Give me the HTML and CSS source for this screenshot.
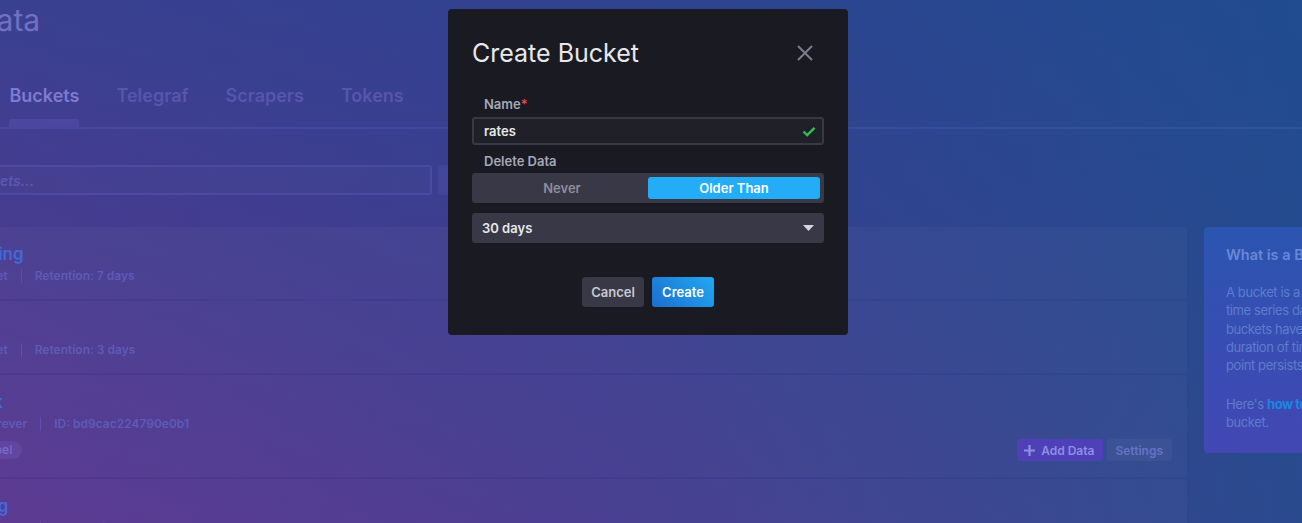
FILE: index.html
```html
<!DOCTYPE html>
<html lang="en">
<head>
<meta charset="utf-8">
<title>Load Data - Buckets</title>
<link rel="stylesheet" href="styles.css">
</head>
<body>
<div class="app">
  <div class="page">
    <header class="page-header">
      <h1 class="page-title">Load Data</h1>
    </header>
    <nav class="tabs">
      <div class="tab"><span class="tab-label">Sources</span><span class="tab-bar"></span></div>
      <div class="tab active"><span class="tab-label">Buckets</span><span class="tab-bar"></span></div>
      <div class="tab"><span class="tab-label">Telegraf</span><span class="tab-bar"></span></div>
      <div class="tab"><span class="tab-label">Scrapers</span><span class="tab-bar"></span></div>
      <div class="tab"><span class="tab-label">Tokens</span><span class="tab-bar"></span></div>
    </nav>
    <div class="page-contents">
      <div class="filter-row">
        <div class="search"><span class="placeholder">Filter buckets...</span></div>
        <div class="sort-btn">Sort by Name (A → Z)</div>
      </div>
      <div class="main-grid">
        <div class="bucket-list">
          <div class="bucket-card">
            <div class="bucket-name">_monitoring</div>
            <div class="bucket-meta"><span>System Bucket</span><span class="sep"></span><span>Retention: 7 days</span></div>
          </div>
          <div class="bucket-card">
            <div class="bucket-name">_tasks</div>
            <div class="bucket-meta"><span>System Bucket</span><span class="sep"></span><span>Retention: 3 days</span></div>
          </div>
          <div class="bucket-card">
            <div class="bucket-name">feedback</div>
            <div class="bucket-meta"><span>Retention: Forever</span><span class="sep"></span><span>ID: bd9cac224790e0b1</span></div>
            <div class="bucket-actions">
              <span class="label-pill">+ Add a label</span>
              <div class="action-buttons">
                <span class="btn-add"><svg class="plus" width="13" height="13" viewBox="0 0 13 13"><path d="M6.5 1v11M1 6.5h11" stroke="currentColor" stroke-width="2.2" fill="none"/></svg>Add Data</span>
                <span class="btn-settings">Settings</span>
              </div>
            </div>
          </div>
          <div class="bucket-card">
            <div class="bucket-name">streaming</div>
            <div class="bucket-meta"><span>Retention: Forever</span><span class="sep"></span><span>ID: 04a1f3c9b2e8d711</span></div>
          </div>
        </div>
        <aside class="info-panel">
          <h3 class="info-title">What is a Bucket?</h3>
          <p class="info-text">A bucket is a named location where<br>time series data is stored. All<br>buckets have a Retention Policy, a<br>duration of time that each data<br>point persists.</p>
          <p class="info-text info-second">Here's <span class="info-link">how to write data</span> into your<br>bucket.</p>
        </aside>
      </div>
    </div>
  </div>
</div>

<div class="overlay">
  <div class="modal">
    <div class="modal-header">
      <h2 class="modal-title">Create Bucket</h2>
      <svg class="close" width="16" height="16" viewBox="0 0 16 16"><path d="M1 1L15 15M15 1L1 15" stroke="currentColor" stroke-width="2" fill="none"/></svg>
    </div>
    <div class="modal-body">
      <div class="field-label">Name<span class="req">*</span></div>
      <div class="input">
        <span class="input-value">rates</span>
        <svg class="check" width="14" height="11" viewBox="0 0 14 11"><path d="M1.5 5.5L5.2 9L12.5 1.8" stroke="currentColor" stroke-width="2.4" fill="none"/></svg>
      </div>
      <div class="field-label second">Delete Data</div>
      <div class="toggle">
        <span class="toggle-opt">Never</span>
        <span class="toggle-opt selected">Older Than</span>
      </div>
      <div class="dropdown">
        <span>30 days</span>
        <svg class="caret" width="11" height="6" viewBox="0 0 11 6"><path d="M0 0H11L5.5 6Z" fill="currentColor"/></svg>
      </div>
      <div class="modal-footer">
        <span class="btn btn-cancel">Cancel</span>
        <span class="btn btn-create">Create</span>
      </div>
    </div>
  </div>
</div>
</body>
</html>
```
FILE: styles.css
```css
* { box-sizing: border-box; }

html, body {
  margin: 0;
  width: 1302px;
  height: 523px;
  overflow: hidden;
}

body {
  position: relative;
  font-family: Inter, "Noto Sans", sans-serif;
  background:
    linear-gradient(to bottom, rgba(20, 78, 146, 0.44) 0%, rgba(20, 78, 146, 0) 100%),
    linear-gradient(to right, #58358f 0%, #46398f 45%, #2a4a8e 100%);
}

.app { width: 1302px; height: 523px; overflow: hidden; }

.page {
  margin-left: -100px;
  width: 1800px;
}

.page-title {
  margin: 0;
  padding-top: 2px;
  font-size: 30px;
  line-height: 36px;
  font-weight: 400;
  color: #7270c2;
  margin-left: -4px;
}

.tabs {
  display: flex;
  gap: 37px;
  margin-top: 46px;
  border-bottom: 2px solid rgba(120, 130, 255, 0.13);
  padding-left: 1px;
}

.tab {
  display: flex;
  flex-direction: column;
}

.tab-label {
  font-size: 18px;
  line-height: 24px;
  font-weight: 600;
  color: #5855ae;
}

.tab-bar {
  height: 8px;
  margin-top: 11px;
  border-radius: 3px 3px 0 0;
}

.tab.active .tab-label { color: #7d7ad0; }
.tab.active .tab-bar { background: rgba(130, 110, 230, 0.2); }

.filter-row {
  display: flex;
  margin-top: 36px;
  gap: 6px;
}

.search {
  width: 532px;
  height: 30px;
  border: 2px solid rgba(120, 120, 240, 0.18);
  border-radius: 3px;
  background: rgba(255, 255, 255, 0.015);
  display: flex;
  align-items: center;
  padding-left: 27px;
}

.placeholder {
  font-size: 14px;
  font-style: italic;
  font-weight: 600;
  color: #5c58b4;
}

.sort-btn {
  width: 200px;
  height: 30px;
  border-radius: 3px;
  background: rgba(130, 120, 255, 0.12);
  color: #7070c0;
  font-size: 13px;
  font-weight: 600;
  display: flex;
  align-items: center;
  padding-left: 12px;
}

.main-grid {
  display: flex;
  gap: 17px;
  margin-top: 32px;
  align-items: flex-start;
}

.bucket-list {
  width: 1287px;
  display: flex;
  flex-direction: column;
  gap: 2px;
}

.bucket-card {
  background: rgba(255, 255, 255, 0.03);
  border-radius: 3px;
  padding: 17px 15px 14px 26px;
}

.bucket-name {
  font-size: 17px;
  line-height: 20px;
  font-weight: 600;
  color: #4169d9;
}

.bucket-meta {
  display: flex;
  align-items: center;
  margin-top: 3px;
  margin-left: -5px;
  font-size: 12px;
  line-height: 18px;
  font-weight: 600;
  color: #5e5ab8;
}

.sep {
  width: 1px;
  height: 14px;
  background: rgba(120, 110, 220, 0.35);
  margin: 0 13px;
}

.bucket-actions {
  display: flex;
  justify-content: space-between;
  align-items: center;
  margin-top: 6px;
  margin-bottom: 2px;
  height: 22px;
}

.label-pill {
  height: 18px;
  line-height: 18px;
  padding: 0 10px 0 11px;
  border-radius: 9px;
  font-size: 12px;
  font-weight: 600;
  color: #7868cc;
  background: rgba(140, 110, 230, 0.18);
}

.action-buttons {
  display: flex;
  gap: 4px;
}

.btn-add, .btn-settings {
  display: flex;
  align-items: center;
  height: 22px;
  border-radius: 3px;
  font-size: 12px;
  font-weight: 600;
}

.btn-add {
  background: #5040b8;
  color: #8d8fe4;
  padding: 0 9px 0 6px;
  gap: 5px;
}

.btn-settings {
  background: rgba(255, 255, 255, 0.04);
  color: #6672c4;
  padding: 0 9px 0 8px;
}

.info-panel {
  width: 330px;
  border-radius: 4px;
  background: linear-gradient(to bottom, #2b55b0 0%, #3a4cb4 60%, #4347b4 100%);
  padding: 18px 22px 21px;
}

.info-title {
  margin: 0;
  font-size: 14.5px;
  line-height: 20px;
  font-weight: 600;
  color: #6a87d7;
}

.info-text {
  margin: 18px 0 0;
  font-size: 13px;
  line-height: 18.3px;
  font-weight: 400;
  letter-spacing: -0.4px;
  color: #5e7ccc;
}

.info-second { margin-top: 20.5px; }

.info-link { color: #1a87e0; font-weight: 700; }

/* Modal */
.overlay {
  position: absolute;
  inset: 0;
  display: flex;
  justify-content: center;
  align-items: flex-start;
  padding-top: 9px;
  padding-right: 6px;
}

.modal {
  width: 400px;
  background: #1a1a22;
  border-radius: 4px;
}

.modal-header {
  display: flex;
  align-items: center;
  justify-content: space-between;
  padding: 28px 24px 0 24px;
}

.modal-title {
  margin: 0;
  font-size: 25px;
  line-height: 32px;
  font-weight: 400;
  color: #e7e8eb;
}

.close {
  color: #7c7c8c;
  margin-right: 11px;
}

.modal-body {
  padding: 27px 24px 28px;
}

.field-label {
  padding-left: 12px;
  font-size: 13px;
  line-height: 16px;
  font-weight: 600;
  color: #a4a8b6;
  margin-bottom: 5px;
}

.field-label.second {
  margin-top: 8px;
  margin-bottom: 4px;
}

.req { color: #dc4e58; }

.input {
  height: 28px;
  border: 2px solid #383846;
  border-radius: 3px;
  background: #202028;
  display: flex;
  align-items: center;
  justify-content: space-between;
  padding: 0 6px 0 10px;
}

.input-value {
  font-size: 13px;
  font-weight: 600;
  color: #e7e8eb;
}

.check { color: #34bb55; }

.toggle {
  height: 30px;
  background: #383846;
  border-radius: 3px;
  padding: 4px;
  display: flex;
}

.toggle-opt {
  flex: 1;
  display: flex;
  align-items: center;
  justify-content: center;
  border-radius: 3px;
  font-size: 13px;
  font-weight: 600;
  color: #8e8e9c;
}

.toggle-opt.selected {
  background: #22adf6;
  color: #ffffff;
}

.dropdown {
  margin-top: 10px;
  height: 30px;
  background: #383846;
  border-radius: 3px;
  display: flex;
  align-items: center;
  justify-content: space-between;
  padding: 0 10px;
  font-size: 13px;
  font-weight: 600;
  color: #e7e8eb;
}

.caret { color: #d4d7dd; }

.modal-footer {
  display: flex;
  justify-content: center;
  gap: 8px;
  margin-top: 34px;
}

.btn {
  width: 62px;
  height: 30px;
  border-radius: 3px;
  display: flex;
  align-items: center;
  justify-content: center;
  font-size: 13px;
  font-weight: 600;
}

.btn-cancel {
  background: #383846;
  color: #c6cad3;
}

.btn-create {
  background: linear-gradient(45deg, #1a6fce 0%, #22a8f3 100%);
  color: #ffffff;
}
```
